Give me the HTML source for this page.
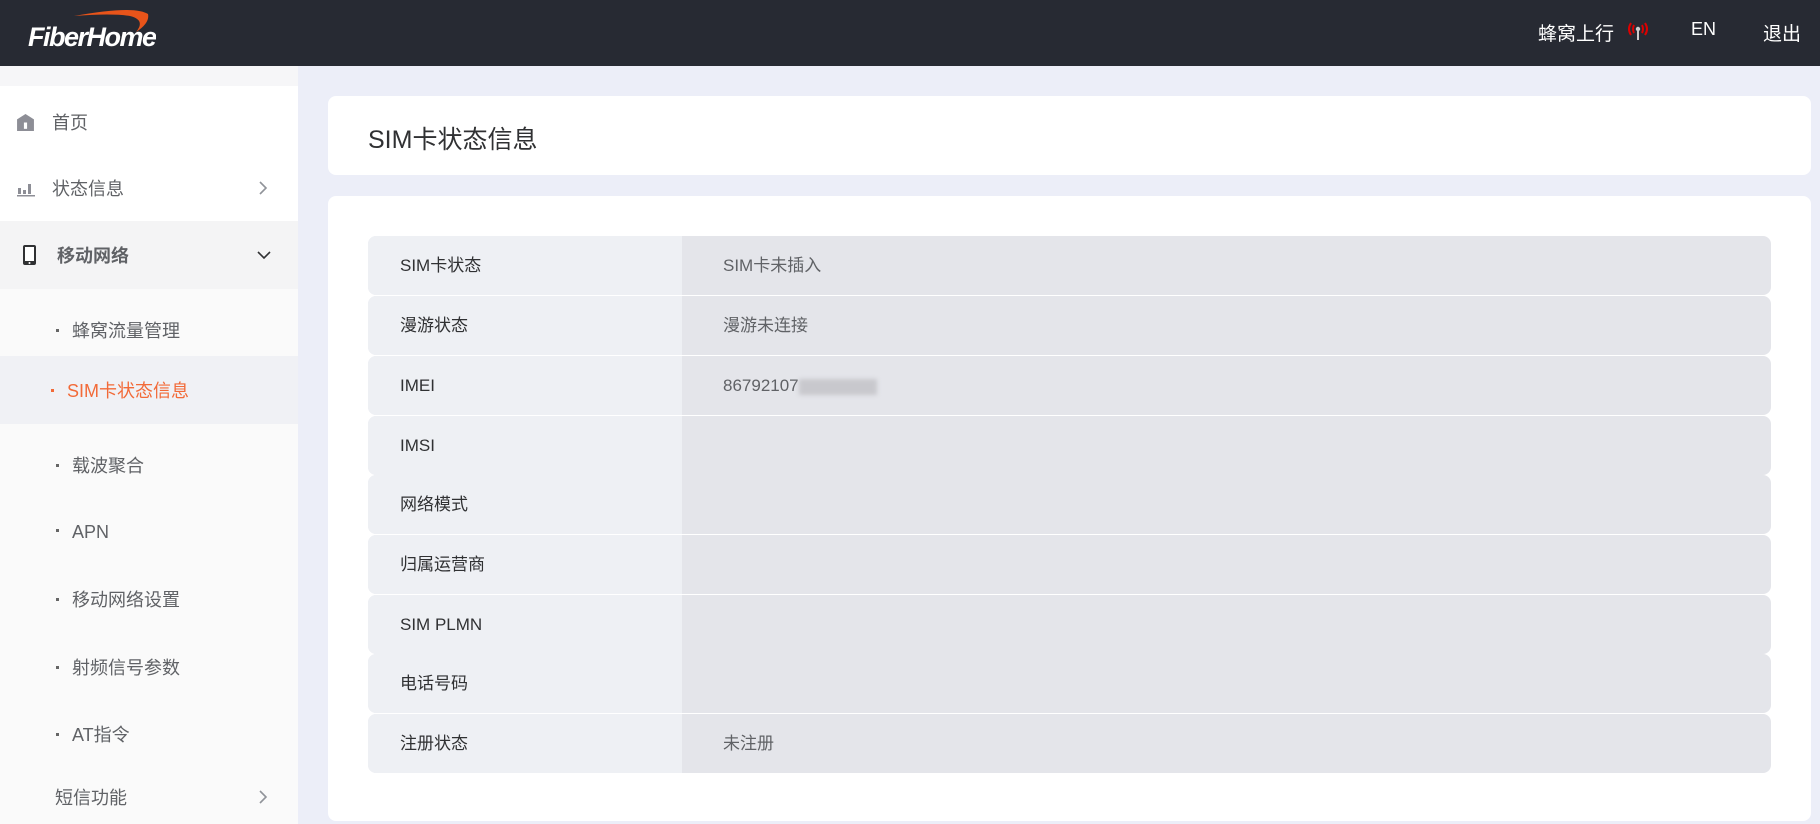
<!DOCTYPE html>
<html><head><meta charset="utf-8"><style>
*{margin:0;padding:0;box-sizing:border-box}
body{width:1820px;height:824px;overflow:hidden;background:#eceef8;font-family:"Liberation Sans","Noto Sans CJK SC",sans-serif;position:relative}
.hdr{position:absolute;left:0;top:0;width:1820px;height:66px;background:#272a33;color:#fff}
.hdr span{position:absolute;top:19px;font-size:19px}
.side{position:absolute;left:0;top:66px;width:298px;height:758px;background:#fafafa}
.side .it{position:absolute;left:0;width:298px;font-size:18px;color:#606266;display:flex;align-items:center}
.card{position:absolute;background:#fff;border-radius:8px}
.row{position:absolute;left:368px;width:1403px;height:59px;border-radius:8px;overflow:hidden;background:#e4e5ea;font-size:17px}
.row .l{position:absolute;left:0;top:0;width:314px;height:59px;background:#eef0f4;color:#303133;padding-left:32px;line-height:59px}
.row .v{position:absolute;left:355px;top:0;line-height:59px;color:#606266}
.dot{display:inline-block;width:3px;height:3px;background:#666;margin-right:13px;vertical-align:middle;position:relative;top:-2px}
</style></head><body>
<div class="hdr">
<svg style="position:absolute;left:26px;top:8px" width="130" height="44" viewBox="0 0 130 44"><path d="M48 8 Q108 -3 122 6 Q124 15 110 24 Q120 12 104 8 Q86 5 48 8Z" fill="#e8541a"/><text x="2" y="38" font-family="Liberation Sans" font-style="italic" font-weight="bold" font-size="27" fill="#fff" letter-spacing="-1.5">FiberHome</text></svg>
<span style="left:1538px">蜂窝上行</span>
<svg style="position:absolute;left:1626px;top:19px" width="24" height="24" viewBox="0 0 24 24"><path d="M5 4 Q1 10 5 16 M8 6 Q6 10 8 14 M19 4 Q23 10 19 16 M16 6 Q18 10 16 14" stroke="#d00" stroke-width="2" fill="none"/><circle cx="12" cy="10" r="2.2" fill="#ccc"/><rect x="11" y="11" width="2" height="10" fill="#ccc"/></svg>
<span style="left:1691px;font-size:18px">EN</span>
<span style="left:1763px">退出</span>
</div>
<div class="side">
<div style="position:absolute;left:0;top:0;width:298px;height:20px;background:#f6f6f8"></div>
<div style="position:absolute;left:0;top:20px;width:298px;height:135px;background:#fff"></div>
<div class="it" style="top:34px;height:44px"><svg style="position:absolute;left:16px" width="19" height="19" viewBox="0 0 18 18"><path d="M1 6 L9 1 L17 6 V17 H1Z" fill="#8d8e96"/><rect x="7.5" y="9" width="3" height="6" fill="#fff"/></svg><span style="position:absolute;left:52px">首页</span></div>
<div class="it" style="top:100px;height:44px"><svg style="position:absolute;left:16px" width="20" height="18" viewBox="0 0 18 18"><rect x="1" y="9" width="3" height="6" fill="#8d8e96"/><rect x="6" y="11" width="3" height="4" fill="#8d8e96"/><rect x="11" y="5" width="3" height="10" fill="#8d8e96"/><rect x="0" y="16" width="18" height="1.5" fill="#8d8e96"/></svg><span style="position:absolute;left:52px">状态信息</span><svg style="position:absolute;left:257px" width="12" height="18" viewBox="0 0 12 18"><path d="M3 3 L9 9 L3 15" stroke="#909399" stroke-width="1.6" fill="none"/></svg></div>
<div class="it" style="top:155px;height:68px;background:#f4f4f5"><svg style="position:absolute;left:22px" width="16" height="24" viewBox="0 0 16 22"><rect x="1" y="1" width="13" height="20" rx="2" fill="#303133"/><rect x="3" y="3" width="9" height="14" fill="#fff"/><circle cx="7.5" cy="19" r="1" fill="#fff"/></svg><span style="position:absolute;left:57px;font-weight:bold">移动网络</span><svg style="position:absolute;left:255px" width="18" height="12" viewBox="0 0 18 12"><path d="M3 3 L9 9 L15 3" stroke="#303133" stroke-width="1.6" fill="none"/></svg></div>
<div class="it" style="top:242px;height:44px"><span style="position:absolute;left:56px"><i class="dot"></i>蜂窝流量管理</span></div>
<div class="it" style="top:290px;height:68px;background:#f0f1f5;color:#f26a38"><span style="position:absolute;left:51px"><i class="dot" style="background:#f26a38"></i>SIM卡状态信息</span></div>
<div class="it" style="top:377px;height:44px"><span style="position:absolute;left:56px"><i class="dot"></i>载波聚合</span></div>
<div class="it" style="top:444px;height:44px"><span style="position:absolute;left:56px"><i class="dot"></i>APN</span></div>
<div class="it" style="top:511px;height:44px"><span style="position:absolute;left:56px"><i class="dot"></i>移动网络设置</span></div>
<div class="it" style="top:579px;height:44px"><span style="position:absolute;left:56px"><i class="dot"></i>射频信号参数</span></div>
<div class="it" style="top:646px;height:44px"><span style="position:absolute;left:56px"><i class="dot"></i>AT指令</span></div>
<div class="it" style="top:709px;height:44px"><span style="position:absolute;left:55px">短信功能</span><svg style="position:absolute;left:257px" width="12" height="18" viewBox="0 0 12 18"><path d="M3 3 L9 9 L3 15" stroke="#909399" stroke-width="1.6" fill="none"/></svg></div>
</div>
<div class="card" style="left:328px;top:96px;width:1483px;height:79px"><div style="position:absolute;left:40px;top:24px;font-size:25px;color:#303133">SIM卡状态信息</div></div>
<div class="card" style="left:328px;top:196px;width:1483px;height:625px"></div>
<div class="row" style="top:236px"><div class="l">SIM卡状态</div><div class="v">SIM卡未插入</div></div>
<div class="row" style="top:296px"><div class="l">漫游状态</div><div class="v">漫游未连接</div></div>
<div class="row" style="top:356px"><div class="l">IMEI</div><div class="v">86792107<span style="display:inline-block;width:78px;height:16px;background:#c8c8cd;vertical-align:middle;filter:blur(2px)"></span></div></div>
<div class="row" style="top:416px"><div class="l">IMSI</div></div>
<div class="row" style="top:475px"><div class="l">网络模式</div></div>
<div class="row" style="top:535px"><div class="l">归属运营商</div></div>
<div class="row" style="top:595px"><div class="l">SIM PLMN</div></div>
<div class="row" style="top:654px"><div class="l">电话号码</div></div>
<div class="row" style="top:714px"><div class="l">注册状态</div><div class="v">未注册</div></div>
</body></html>
